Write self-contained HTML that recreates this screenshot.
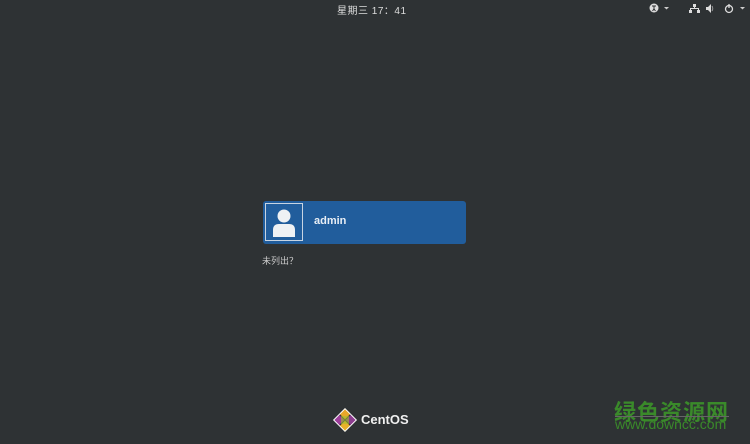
<!DOCTYPE html>
<html><head><meta charset="utf-8"><style>
html,body{margin:0;padding:0}
body{width:750px;height:444px;background:#2e3234;position:relative;overflow:hidden;font-family:"Liberation Sans","Noto Sans CJK SC",sans-serif;color:#eee}
.clock{position:absolute;left:337px;top:2px;font-size:10px;color:#ddd;letter-spacing:.5px}
.card{position:absolute;left:263px;top:201px;width:203px;height:43px;background:#215d9c;border-radius:3px}
.av{position:absolute;left:2px;top:2px;width:36px;height:36px;border:1px solid #c8d4e2;background:#215d9c}
.name{position:absolute;left:51px;top:14px;font-size:11px;font-weight:bold;color:#e8eef5}
.unl{position:absolute;left:262px;top:254px;font-size:9px;color:#ccc}
.wm1{position:absolute;left:614px;top:395px;font-size:22px;font-weight:bold;color:#3a8a2a;letter-spacing:1px}
.wm2{position:absolute;left:615px;top:416px;font-size:14px;color:#3a8a2a;border-top:1px solid #666;width:114px;line-height:15px}
</style></head><body>
<div class="clock">星期三 17：41</div>
<svg style="position:absolute;left:645px;top:2px" width="105" height="14">
<circle cx="9" cy="6" r="4.5" fill="#ddd"/><path d="M7 4h4M9 4v4M7.5 9l1.5-2 1.5 2" stroke="#2a2d2f" stroke-width="1" fill="none"/>
<path d="M19 5h5l-2.5 2.5z" fill="#ccc"/>
<rect x="48" y="2" width="3" height="3" fill="#ddd"/><rect x="44" y="8" width="3" height="3" fill="#ddd"/><rect x="52" y="8" width="3" height="3" fill="#ddd"/><path d="M49.5 5v2M45.5 8V6.5h8V8" stroke="#ddd" fill="none"/>
<path d="M61 5h2l3-3v9l-3-3h-2z" fill="#ddd"/><path d="M67 4q1.5 2.5 0 5" stroke="#999" fill="none"/>
<circle cx="84" cy="7" r="3.5" stroke="#ddd" stroke-width="1.3" fill="none"/><path d="M84 2v4" stroke="#ddd" stroke-width="1.3"/>
<path d="M95 5h5l-2.5 2.5z" fill="#ccc"/>
</svg>
<div class="card"><div class="av"><svg width="36" height="36"><circle cx="18" cy="12" r="6.5" fill="#eef1f4"/><path d="M7 33v-7q0-6 6-6h10q6 0 6 6v7z" fill="#eef1f4"/></svg></div><div class="name">admin</div></div>
<div class="unl">未列出？</div>
<svg style="position:absolute;left:332px;top:407px" width="26" height="26">
<g transform="rotate(45 13 13)"><rect x="5" y="5" width="7.5" height="7.5" fill="#e8a72a"/><rect x="13.5" y="5" width="7.5" height="7.5" fill="#8c3d8f"/><rect x="5" y="13.5" width="7.5" height="7.5" fill="#9c3d9a"/><rect x="13.5" y="13.5" width="7.5" height="7.5" fill="#e8b12a"/><rect x="5" y="5" width="16" height="16" fill="none" stroke="#fff" stroke-width="1"/></g>
<rect x="9" y="9" width="8" height="8" fill="#a3c030" opacity=".6"/>
</svg>
<div style="position:absolute;left:361px;top:412px;font-size:13px;font-weight:bold;color:#f0f0f0">CentOS</div>
<div class="wm1">绿色资源网</div>
<div class="wm2">www.downcc.com</div>
</body></html>
